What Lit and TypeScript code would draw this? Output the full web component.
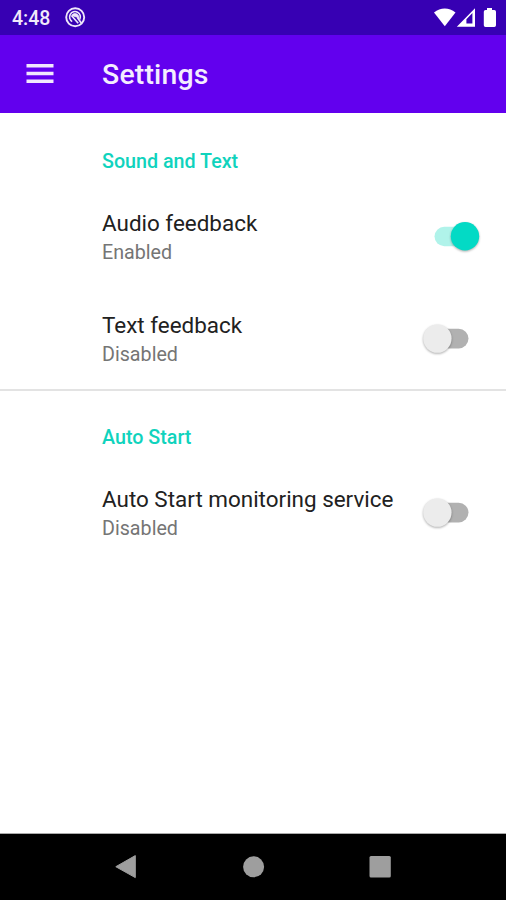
import { LitElement, html, css } from "lit";
import { customElement, property } from "lit/decorators.js";

@customElement("setting-switch")
class SettingSwitch extends LitElement {
  @property({ type: Boolean }) on = false;

  static styles = css`
    :host { display: block; width: 68px; height: 44px; flex: none; }
    svg { display: block; overflow: visible; }
    .thumb { filter: drop-shadow(0 1.5px 1.2px rgba(0, 0, 0, 0.32)); }
  `;

  render() {
    return this.on
      ? html`<svg width="68" height="44" viewBox="0 0 68 44">
          <rect x="16.5" y="11.8" width="34" height="19.4" rx="9.7" fill="#b0f3ea" />
          <circle class="thumb" cx="47" cy="21.3" r="14.2" fill="#03dac5" />
        </svg>`
      : html`<svg width="68" height="44" viewBox="0 0 68 44">
          <rect x="16.5" y="11.8" width="34" height="19.6" rx="9.8" fill="#b1b1b1" />
          <circle class="thumb" cx="19.4" cy="21.6" r="14.2" fill="#ececec" />
        </svg>`;
  }
}

@customElement("setting-row")
class SettingRow extends LitElement {
  @property() label = "";
  @property({ type: Boolean }) on = false;

  static styles = css`
    :host { display: flex; height: 102px; align-items: center; padding: 0 20px 0 102px; box-sizing: border-box; }
    .text { flex: 1; white-space: nowrap; }
    .label { font-size: 22.45px; line-height: 31px; color: #212121; }
    .state { font-size: 19.7px; line-height: 27px; color: #757575; }
  `;

  render() {
    return html`
      <div class="text">
        <div class="label">${this.label}</div>
        <div class="state">${this.on ? "Enabled" : "Disabled"}</div>
      </div>
      <setting-switch ?on=${this.on}></setting-switch>
    `;
  }
}

@customElement("app-root")
class AppRoot extends LitElement {
  static styles = css`
    :host {
      display: flex; flex-direction: column; width: 506px; height: 900px;
      background: #fff; overflow: hidden; font-family: Roboto, "Liberation Sans", sans-serif;
    }
    svg { display: block; }
    .status {
      height: 34.5px; flex: none; display: flex; align-items: center; background: #3700b3;
      color: #f1eafb; padding: 0 9px 0 12px; box-sizing: border-box;
    }
    .time { font-size: 19.5px; font-weight: 500; line-height: 37px; width: 52px; height: 34px; }
    .signals { margin-left: auto; }
    .bar {
      height: 78px; flex: none; display: flex; align-items: center; background: #6200ee;
      color: #f4edff; padding-left: 26px; box-sizing: border-box;
    }
    .title { margin-left: 48px; font-size: 28.4px; font-weight: 500; letter-spacing: 0.2px; line-height: 36px; padding-top: 3px; }
    .content { flex: 1; }
    .category {
      height: 73px; box-sizing: border-box; padding: 36px 0 0 102px; font-size: 19.7px;
      font-weight: 500; line-height: 26px; color: #10d3bd;
    }
    .divided { border-top: 2px solid #e3e3e3; height: 73px; margin-top: -1px; padding-top: 34px; }
    .nav {
      height: 67px; flex: none; background: #000; border-top: 1px solid #aaa; box-sizing: border-box;
      display: flex; justify-content: center;
    }
  `;

  render() {
    return html`
      <div class="status">
        <div class="time">4:48</div>
        <svg width="22" height="22" viewBox="0 0 22 22" fill="none" stroke="#eee6fa">
          <circle cx="11.2" cy="11.3" r="9" stroke-width="1.9" />
          <path d="M15.8 13.4A5.4 5.4 0 1 0 8.2 15.6" stroke-width="1.6" />
          <path d="M7.6 9.4C9.4 6.8 13 7 14.4 9.6L15 12L12.4 11Z" fill="#eee6fa" stroke-width=".8" />
          <path d="M7.6 9.8L14.2 17.2M13.4 11.5L17.4 17.2" stroke-width="1.7" />
        </svg>
        <svg class="signals" width="64" height="24" viewBox="433 5 64 24" fill="#fff">
          <path d="M434 12.6C440.5 7 449 7 455.5 12.6L444.8 26.2Z" />
          <path fill-rule="evenodd" d="M456.8 26.8L475 8.2V26.8ZM466.400 23.6H472.400V13L466.400 19.200Z" />
          <path d="M487 8h5v2h2.3q1.7 0 1.7 1.7v13.5q0 1.7-1.7 1.7h-8.8q-1.7 0-1.7-1.7V11.7q0-1.7 1.7-1.7H487z" />
        </svg>
      </div>
      <div class="bar">
        <svg width="28" height="20" viewBox="0 0 28 20" fill="#f1e8fe">
          <path d="M.5 0H27.5V3.400H.5ZM.5 7.800H27.5V11.200H.5ZM.5 15.600H27.5V19H.5Z" />
        </svg>
        <div class="title">Settings</div>
      </div>
      <div class="content">
        <div class="category">Sound and Text</div>
        <setting-row label="Audio feedback" on></setting-row>
        <setting-row label="Text feedback"></setting-row>
        <div class="category divided">Auto Start</div>
        <setting-row label="Auto Start monitoring service"></setting-row>
      </div>
      <div class="nav">
        <svg width="330" height="66" viewBox="88 834 330 66" fill="#9e9e9e">
          <path d="M115.8 866.700L135.300 855.600V877.600Z" stroke="#9e9e9e" stroke-width="1" stroke-linejoin="round" />
          <circle cx="253.6" cy="866.800" r="10.5" />
          <rect x="369.5" y="856" width="21.3" height="21.6" rx="1.5" />
        </svg>
      </div>
    `;
  }
}
